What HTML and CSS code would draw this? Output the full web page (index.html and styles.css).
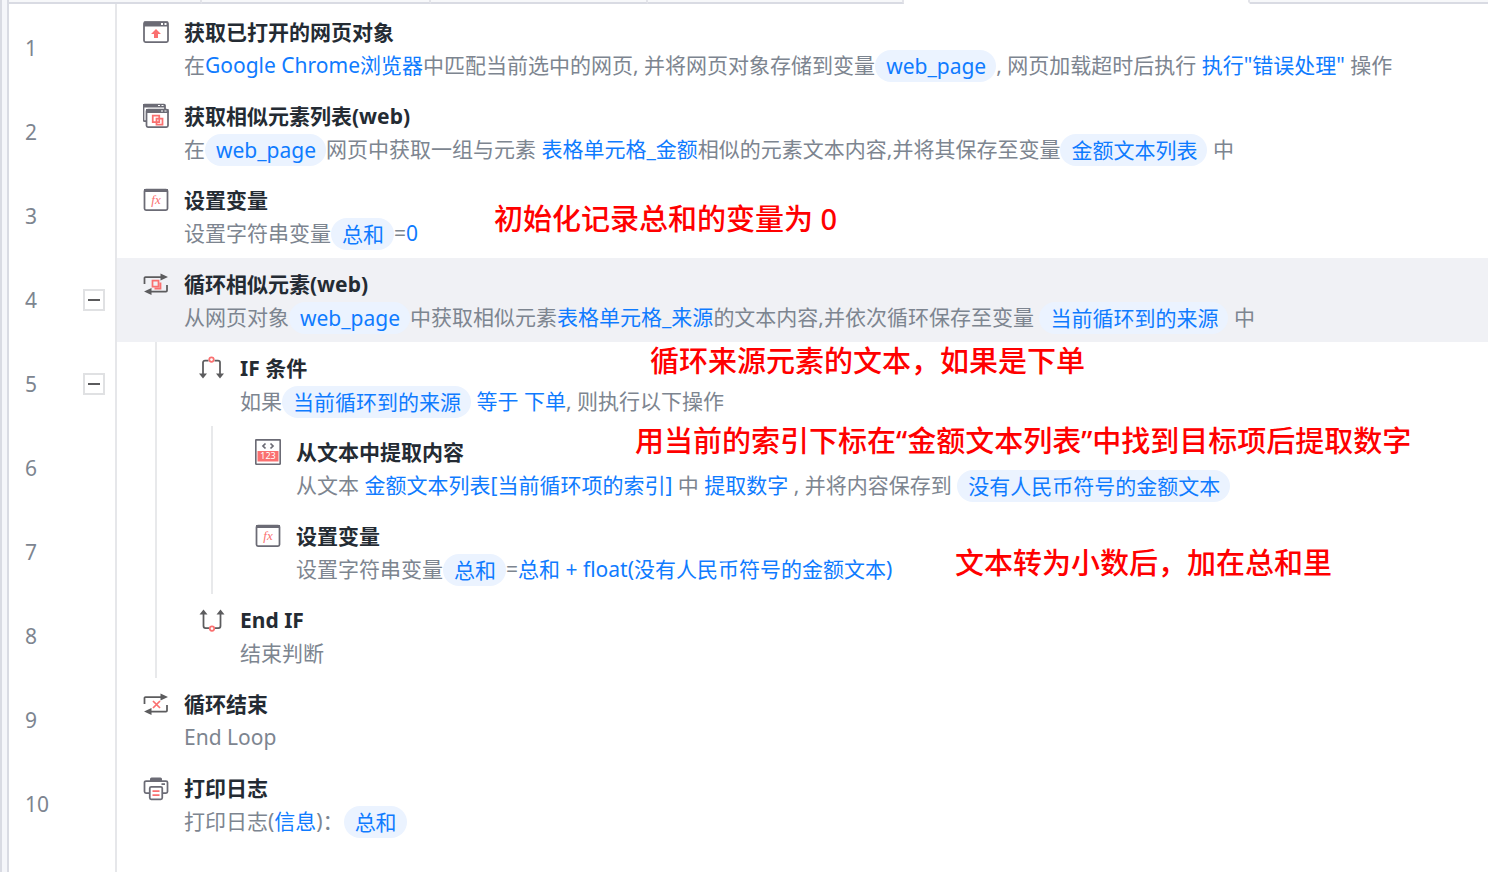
FILE: index.html
```html
<!DOCTYPE html>
<html lang="zh-CN">
<head>
<meta charset="utf-8">
<meta name="viewport" content="width=device-width, initial-scale=1">
<title>流程编辑</title>
<link rel="stylesheet" href="styles.css">
</head>
<body>
<div class="app">
  <div class="rail"></div>
  <main class="editor">
    <div class="tabs">
      <span class="tab tab-first"></span>
      <span class="tab tab-second"></span>
      <span class="tab tab-third"></span>
      <span class="tab tab-fourth"></span>
      <span class="tab tab-active"></span>
      <span class="tab tab-rest"></span>
    </div>
    <ol class="steps">
      <li class="step">
        <div class="gutter"><span>1</span></div>
        <div class="content">
          <svg class="icon" viewBox="0 0 26 26" aria-hidden="true">
            <rect class="line" x="1" y="3" width="24" height="20" rx="1.5"/>
            <path class="solid" d="M1 2.500h24v5H1z"/>
            <path class="dot" d="M18 4h2v2h-2zM21.500 4h2v2h-2z"/>
            <path class="accent" d="M13 10l5 5h-3v4h-4v-4H8z"/>
          </svg>
          <div class="body">
            <h2 class="title">获取已打开的网页对象</h2>
            <p class="desc">在<a href="#">Google Chrome浏览器</a>中匹配当前选中的网页, 并将网页对象存储到变量<span class="pill">web_page</span>, 网页加载超时后执行 <a href="#">执行"错误处理"</a> 操作</p>
          </div>
        </div>
      </li>
      <li class="step">
        <div class="gutter"><span>2</span></div>
        <div class="content">
          <svg class="icon" viewBox="0 0 26 26" aria-hidden="true">
            <path class="line" d="M22 6V2.500a1 1 0 0 0-1-1H1.500a1 1 0 0 0-1 1V17a1 1 0 0 0 1 1H3"/>
            <path class="solid" d="M0 1h22v3.500H0z"/>
            <path class="dot" d="M15 2h2v1h-2zM18.500 2h2v1h-2z"/>
            <rect class="line paper" x="3.500" y="6.500" width="21.500" height="17.500" rx="1.500"/>
            <path class="solid" d="M3 6h22.500v4H3z"/>
            <path class="dot" d="M18 7.500h2v1h-2zM21.500 7.500h2v1h-2z"/>
            <path class="accent-line" d="M9.750 12.500h6.500v6.500h-6.500zM13.500 15.500h6v6h-6z"/>
          </svg>
          <div class="body">
            <h2 class="title">获取相似元素列表(web)</h2>
            <p class="desc">在<span class="pill">web_page</span>网页中获取一组与元素 <a href="#">表格单元格_金额</a>相似的元素文本内容,并将其保存至变量<span class="pill">金额文本列表</span> 中</p>
          </div>
        </div>
      </li>
      <li class="step">
        <div class="gutter"><span>3</span></div>
        <div class="content">
          <svg class="icon" viewBox="0 0 26 26" aria-hidden="true">
            <rect class="line" x="1.500" y="2.500" width="23" height="20.500" rx="1.500"/>
            <path class="solid" d="M1 2h24v3H1z"/>
            <text class="formula" x="13" y="17">fx</text>
          </svg>
          <div class="body">
            <h2 class="title">设置变量</h2>
            <p class="desc">设置字符串变量<span class="pill">总和</span>=<a href="#">0</a></p>
          </div>
          <p class="note note-init">初始化记录总和的变量为 0</p>
        </div>
      </li>
      <li class="step selected">
        <div class="gutter"><span>4</span><button class="fold" type="button" aria-label="折叠第 4 行"></button></div>
        <div class="content">
          <svg class="icon" viewBox="0 0 26 26" aria-hidden="true">
            <path class="flow" d="M1.500 13V7a1 1 0 0 1 1-1H18M24 14v5.500a1 1 0 0 1-1 1H8"/>
            <path class="flow-tip" d="M17.500 2.500L25 6l-7.500 3.500zM8.500 17L1 20.500 8.500 24z"/>
            <path class="accent-line" d="M9.500 9.500h6v6h-6zM17.500 11.500v6h-6"/>
          </svg>
          <div class="body">
            <h2 class="title">循环相似元素(web)</h2>
            <p class="desc">从网页对象<span class="pill">web_page</span>中获取相似元素<a href="#">表格单元格_来源</a>的文本内容,并依次循环保存至变量 <span class="pill">当前循环到的来源</span> 中</p>
          </div>
        </div>
      </li>
      <li class="step">
        <div class="gutter"><span>5</span><button class="fold" type="button" aria-label="折叠第 5 行"></button></div>
        <div class="content">
          <span class="guide"></span>
          <svg class="icon" viewBox="0 0 26 26" aria-hidden="true">
            <path class="flow" d="M4 20V7.500a2 2 0 0 1 2-2h3.500M21 20V7.500a2 2 0 0 0-2-2h-3.500"/>
            <path class="flow-tip" d="M0 18.500h8L4 23.500zM17 18.500h8l-4 5z"/>
            <circle class="accent-line" cx="12.500" cy="4.500" r="2.250"/>
          </svg>
          <div class="body">
            <h2 class="title">IF 条件</h2>
            <p class="desc">如果<span class="pill">当前循环到的来源</span> <a href="#">等于</a> <a href="#">下单</a>, 则执行以下操作</p>
          </div>
          <p class="note note-loop">循环来源元素的文本，如果是下单</p>
        </div>
      </li>
      <li class="step">
        <div class="gutter"><span>6</span></div>
        <div class="content">
          <span class="guide"></span><span class="guide"></span>
          <svg class="icon" viewBox="0 0 26 26" aria-hidden="true">
            <rect class="line" x="0.750" y="0.750" width="24.500" height="24.500" rx="1"/>
            <path class="line" d="M10.500 4.500L8 7l2.500 2.500M15.500 4.500L18 7l-2.500 2.500"/>
            <path class="accent" d="M2.500 12h21v10.500h-21z"/>
            <text class="digits" x="13" y="20">123</text>
          </svg>
          <div class="body">
            <h2 class="title">从文本中提取内容</h2>
            <p class="desc">从文本 <a href="#">金额文本列表[当前循环项的索引]</a> 中 <a href="#">提取数字</a> , 并将内容保存到 <span class="pill">没有人民币符号的金额文本</span></p>
          </div>
          <p class="note note-extract">用当前的索引下标在“金额文本列表”中找到目标项后提取数字</p>
        </div>
      </li>
      <li class="step">
        <div class="gutter"><span>7</span></div>
        <div class="content">
          <span class="guide"></span><span class="guide"></span>
          <svg class="icon" viewBox="0 0 26 26" aria-hidden="true">
            <rect class="line" x="1.500" y="2.500" width="23" height="20.500" rx="1.500"/>
            <path class="solid" d="M1 2h24v3H1z"/>
            <text class="formula" x="13" y="17">fx</text>
          </svg>
          <div class="body">
            <h2 class="title">设置变量</h2>
            <p class="desc">设置字符串变量<span class="pill">总和</span>=<a href="#">总和 + float(没有人民币符号的金额文本)</a></p>
          </div>
          <p class="note note-sum">文本转为小数后，加在总和里</p>
        </div>
      </li>
      <li class="step">
        <div class="gutter"><span>8</span></div>
        <div class="content">
          <span class="guide"></span>
          <svg class="icon" viewBox="0 0 26 26" aria-hidden="true">
            <path class="flow" d="M4.500 6v13a2 2 0 0 0 2 2H10M21.500 6v13a2 2 0 0 1-2 2H16"/>
            <path class="flow-tip" d="M0.500 7.500h8l-4-5zM17.500 7.500h8l-4-5z"/>
            <circle class="accent-line" cx="13" cy="21.500" r="2.250"/>
          </svg>
          <div class="body">
            <h2 class="title">End IF</h2>
            <p class="desc">结束判断</p>
          </div>
        </div>
      </li>
      <li class="step">
        <div class="gutter"><span>9</span></div>
        <div class="content">
          <svg class="icon" viewBox="0 0 26 26" aria-hidden="true">
            <path class="flow" d="M1.500 13V7a1 1 0 0 1 1-1H18M24 14v5.500a1 1 0 0 1-1 1H8"/>
            <path class="flow-tip" d="M17.500 2.500L25 6l-7.500 3.500zM8.500 17L1 20.500 8.500 24z"/>
            <path class="accent-line" d="M10 10l7 7M17 10l-7 7"/>
          </svg>
          <div class="body">
            <h2 class="title">循环结束</h2>
            <p class="desc">End Loop</p>
          </div>
        </div>
      </li>
      <li class="step">
        <div class="gutter"><span>10</span></div>
        <div class="content">
          <svg class="icon" viewBox="0 0 26 26" aria-hidden="true">
            <path class="solid" d="M7 6V4a1.500 1.500 0 0 1 1.500-1.500h9A1.500 1.500 0 0 1 19 4v2z"/>
            <path class="line" d="M6 18H3a1.500 1.500 0 0 1-1.500-1.500v-9A1.500 1.500 0 0 1 3 6h20a1.500 1.500 0 0 1 1.500 1.500v9A1.500 1.500 0 0 1 23 18h-3M18.500 9H22"/>
            <rect class="line paper" x="6.750" y="11.750" width="12.500" height="12.500" rx="1.500"/>
            <path class="accent-line" d="M9.500 16h7M9.500 20h7"/>
          </svg>
          <div class="body">
            <h2 class="title">打印日志</h2>
            <p class="desc">打印日志(<a href="#">信息</a>)：<span class="pill">总和</span></p>
          </div>
        </div>
      </li>
    </ol>
  </main>
</div>
</body>
</html>
```

FILE: styles.css
```css
* {
  box-sizing: border-box;
}

body {
  margin: 0;
  background: #fff;
  color: #7d8590;
  font-family: "Noto Sans", "Noto Sans CJK SC", sans-serif;
  font-size: 21px;
}

.app {
  display: flex;
  min-height: 100vh;
}

.rail {
  flex: none;
  width: 9px;
  background: #f5f6fa;
  border: solid #d9dbe3;
  border-width: 0 2px;
}

.editor {
  flex: 1;
  min-width: 0;
  display: flex;
  flex-direction: column;
}

.tabs {
  display: flex;
  height: 4px;
}

.tab {
  background: #f7f8fa;
  border-right: 2px solid #e3e4e9;
  border-bottom: 2px solid #d9dbe3;
}

.tab-first {
  flex: 191 0 0;
}

.tab-second {
  flex: 227 0 0;
}

.tab-third {
  flex: 215 0 0;
}

.tab-fourth {
  flex: 254 0 0;
}

.tab-active {
  flex: 344 0 0;
  background: #fff;
  border-bottom-color: #fff;
}

.tab-rest {
  flex: 238 0 0;
  border-right: 0;
}

.steps {
  flex: 1;
  display: flex;
  flex-direction: column;
  margin: 0;
  padding: 2px 0 0;
  list-style: none;
  background: linear-gradient(#e6e7ea, #e6e7ea) 106px 0 / 2px 100% no-repeat;
}

.step {
  display: flex;
}

.gutter {
  flex: none;
  width: 108px;
  padding: 0 12px 0 16px;
  display: flex;
  align-items: center;
  justify-content: space-between;
}

.fold {
  width: 22px;
  height: 22px;
  padding: 0;
  display: grid;
  place-items: center;
  background: #fff;
  border: 2px solid #e0e1e3;
  cursor: pointer;
}

.fold::before {
  content: "";
  width: 12px;
  height: 2px;
  background: #5a5a5c;
}

.content {
  flex: 1;
  min-width: 0;
  position: relative;
  display: flex;
  padding-right: 16px;
}

.selected .content {
  background: #f0f1f5;
}

.guide {
  flex: none;
  width: 18px;
  margin-left: 38px;
  border-left: 2px solid #e8e9eb;
}

.icon {
  flex: none;
  width: 26px;
  height: 26px;
  margin: 13px 15px 0 26px;
}

.body {
  min-width: 0;
  padding: 12px 0 8px;
}

.title {
  margin: 0 0 4px;
  color: #242b33;
  font-size: 21px;
  font-weight: 700;
  line-height: 28px;
  white-space: nowrap;
}

.desc {
  min-height: 32px;
  margin: 0;
  line-height: 30px;
  white-space: nowrap;
}

.desc a {
  color: #0f7bff;
  text-decoration: none;
}

.pill {
  display: inline-block;
  height: 32px;
  padding: 0 10px 0 11px;
  border-radius: 16px;
  background: #ebf3ff;
  color: #0f7bff;
  line-height: 32px;
  vertical-align: top;
}

.note {
  position: absolute;
  margin: 0;
  color: #f00;
  font-size: 29px;
  font-weight: 500;
  line-height: 40px;
  white-space: nowrap;
}

.note-init {
  left: 377px;
  top: 25px;
}

.note-loop {
  left: 533px;
  top: -1px;
}

.note-extract {
  left: 518px;
  top: -5px;
}

.note-sum {
  left: 838px;
  top: 33px;
}

.line,
.flow,
.accent-line {
  fill: none;
  stroke: #6b6b75;
  stroke-width: 1.75;
}

.flow {
  stroke: #5c5c5e;
}

.accent-line {
  stroke: #fa7070;
}

.solid {
  fill: #6b6b75;
}

.flow-tip {
  fill: #5c5c5e;
}

.accent {
  fill: #fa7070;
}

.dot {
  fill: #fff;
}

.paper {
  fill: #fff;
}

.formula {
  fill: #fa7070;
  font: italic 13px "Liberation Serif", serif;
  text-anchor: middle;
}

.digits {
  fill: #fff;
  font: 9px "Noto Sans", sans-serif;
  text-anchor: middle;
}
```
